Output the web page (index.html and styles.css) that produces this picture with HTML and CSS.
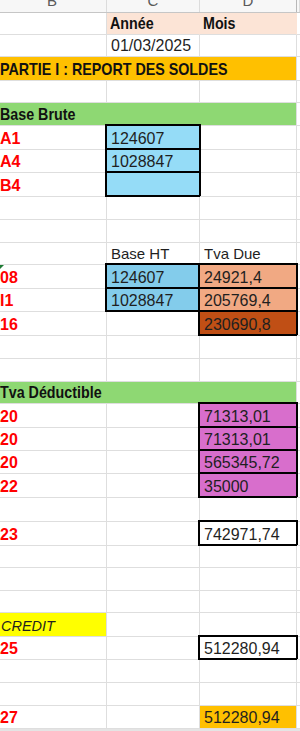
FILE: index.html
```html
<!DOCTYPE html>
<html lang="fr">
<head>
<meta charset="utf-8">
<title>Feuille</title>
<link rel="stylesheet" href="styles.css">
</head>
<body>
<div class="sheet">
  <div class="colhead">
    <div class="hc">B</div><div class="hc">C</div><div class="hc">D</div><div class="hc last"></div>
  </div>

  <div class="row h22"><div class="c"></div><div class="c peach hd"><span>Année</span></div><div class="c peach hd"><span>Mois</span></div><div class="c e"></div></div>
  <div class="row h22"><div class="c"></div><div class="c num">01/03/2025</div><div class="c"></div><div class="c e"></div></div>
  <div class="row h24"><div class="c span3 orange hd"><span>PARTIE I : REPORT DES SOLDES</span></div><div class="c e"></div></div>
  <div class="row h22"><div class="c"></div><div class="c"></div><div class="c"></div><div class="c e"></div></div>
  <div class="row h23"><div class="c span3 green hd"><span>Base Brute</span></div><div class="c e"></div></div>
  <div class="row h24"><div class="c lbl">A1</div><div class="c num blue bx">124607</div><div class="c"></div><div class="c e"></div></div>
  <div class="row h23"><div class="c lbl">A4</div><div class="c num blue bx">1028847</div><div class="c"></div><div class="c e"></div></div>
  <div class="row h24"><div class="c lbl">B4</div><div class="c num blue bx"></div><div class="c"></div><div class="c e"></div></div>
  <div class="row h23"><div class="c"></div><div class="c"></div><div class="c"></div><div class="c e"></div></div>
  <div class="row h23"><div class="c"></div><div class="c"></div><div class="c"></div><div class="c e"></div></div>
  <div class="row h22"><div class="c"></div><div class="c sub">Base HT</div><div class="c sub">Tva Due</div><div class="c e"></div></div>
  <div class="row h24"><div class="c lbl tri">08</div><div class="c num blue2 bx">124607</div><div class="c num salmon bx">24921,4</div><div class="c e"></div></div>
  <div class="row h23"><div class="c lbl">I1</div><div class="c num blue2 bx">1028847</div><div class="c num salmon bx">205769,4</div><div class="c e"></div></div>
  <div class="row h24"><div class="c lbl">16</div><div class="c"></div><div class="c num rust bx">230690,8</div><div class="c e"></div></div>
  <div class="row h23"><div class="c"></div><div class="c"></div><div class="c"></div><div class="c e"></div></div>
  <div class="row h23"><div class="c"></div><div class="c"></div><div class="c"></div><div class="c e"></div></div>
  <div class="row h22"><div class="c span3 green hd"><span>Tva Déductible</span></div><div class="c e"></div></div>
  <div class="row h24"><div class="c lbl">20</div><div class="c"></div><div class="c num magenta bx">71313,01</div><div class="c e"></div></div>
  <div class="row h23"><div class="c lbl">20</div><div class="c"></div><div class="c num magenta bx">71313,01</div><div class="c e"></div></div>
  <div class="row h23"><div class="c lbl">20</div><div class="c"></div><div class="c num magenta bx">565345,72</div><div class="c e"></div></div>
  <div class="row h24"><div class="c lbl">22</div><div class="c"></div><div class="c num magenta bx">35000</div><div class="c e"></div></div>
  <div class="row h24"><div class="c"></div><div class="c"></div><div class="c"></div><div class="c e"></div></div>
  <div class="row h24"><div class="c lbl">23</div><div class="c"></div><div class="c num bx">742971,74</div><div class="c e"></div></div>
  <div class="row h22"><div class="c"></div><div class="c"></div><div class="c"></div><div class="c e"></div></div>
  <div class="row h23"><div class="c"></div><div class="c"></div><div class="c"></div><div class="c e"></div></div>
  <div class="row h22"><div class="c"></div><div class="c"></div><div class="c"></div><div class="c e"></div></div>
  <div class="row h24"><div class="c yellow it">CREDIT</div><div class="c"></div><div class="c"></div><div class="c e"></div></div>
  <div class="row h23"><div class="c lbl">25</div><div class="c"></div><div class="c num bx">512280,94</div><div class="c e"></div></div>
  <div class="row h23"><div class="c"></div><div class="c"></div><div class="c"></div><div class="c e"></div></div>
  <div class="row h23"><div class="c"></div><div class="c"></div><div class="c"></div><div class="c e"></div></div>
  <div class="row h23"><div class="c lbl">27</div><div class="c"></div><div class="c num orange">512280,94</div><div class="c e"></div></div>
  <div class="foot"></div>
</div>
</body>
</html>
```

FILE: styles.css
```css
html, body {
  margin: 0;
  padding: 0;
  background: #ffffff;
  overflow: hidden;
}

.sheet {
  margin-left: -2px;
  width: 302px;
  font-family: "Liberation Sans", Arial, sans-serif;
  color: #1f1f1f;
}

.colhead {
  display: grid;
  grid-template-columns: 109px 93px 97px 3px;
  height: 13px;
  background: #f7f7f7;
  border-bottom: 1px solid #c6c6c6;
  box-sizing: border-box;
  overflow: hidden;
}

.hc {
  border-right: 1px solid #dcdcdc;
  text-align: center;
  font-size: 15px;
  line-height: 15px;
  margin-top: -7px;
  color: #5a5a5a;
}

.hc:nth-child(3) {
  border-right-color: #b8b8b8;
}

.row {
  display: grid;
  grid-template-columns: 109px 93px 97px 3px;
}

.h22 { height: 22px; }
.h23 { height: 23px; }
.h24 { height: 24px; }

.c {
  position: relative;
  box-sizing: border-box;
  border-right: 1px solid #dedede;
  border-bottom: 1px solid #dedede;
  display: flex;
  align-items: flex-end;
  padding: 0 0 1px 4px;
  font-size: 16px;
  line-height: 18px;
  white-space: nowrap;
}

.c.lbl {
  padding-left: 2px;
}

.c.e {
  border-right: 0;
}

.span3 {
  grid-column: span 3;
}

.c.hd {
  font-weight: bold;
  font-size: 17px;
  color: #111;
  padding-left: 3px;
}

.c.span3.hd {
  padding-left: 2px;
}

.hd span {
  display: inline-block;
  transform: scaleX(0.84);
  transform-origin: left bottom;
}

.lbl {
  color: #ff0000;
  font-weight: bold;
}

.c.sub {
  font-size: 15px;
}

.c.it {
  font-style: italic;
  font-size: 14.5px;
  padding-left: 3px;
}

.peach { background: #fce4d6; border-right-color: #fce4d6; }
.orange { background: #ffc000; }
.green { background: #8ed873; }
.blue { background: #95dcf7; }
.blue2 { background: #83cceb; }
.salmon { background: #f1a983; }
.rust { background: #c04f15; }
.magenta { background: #d86ecc; }
.yellow { background: #ffff00; }

.bx::after {
  content: "";
  position: absolute;
  left: -2px;
  top: -2px;
  right: -2px;
  bottom: -1px;
  border: 2px solid #000;
  pointer-events: none;
}

.tri::before {
  content: "";
  position: absolute;
  left: 1px;
  top: 0;
  border-top: 5px solid #1e7b34;
  border-right: 5px solid transparent;
}

.foot {
  height: 2px;
  background: #e4e4e4;
}
```
